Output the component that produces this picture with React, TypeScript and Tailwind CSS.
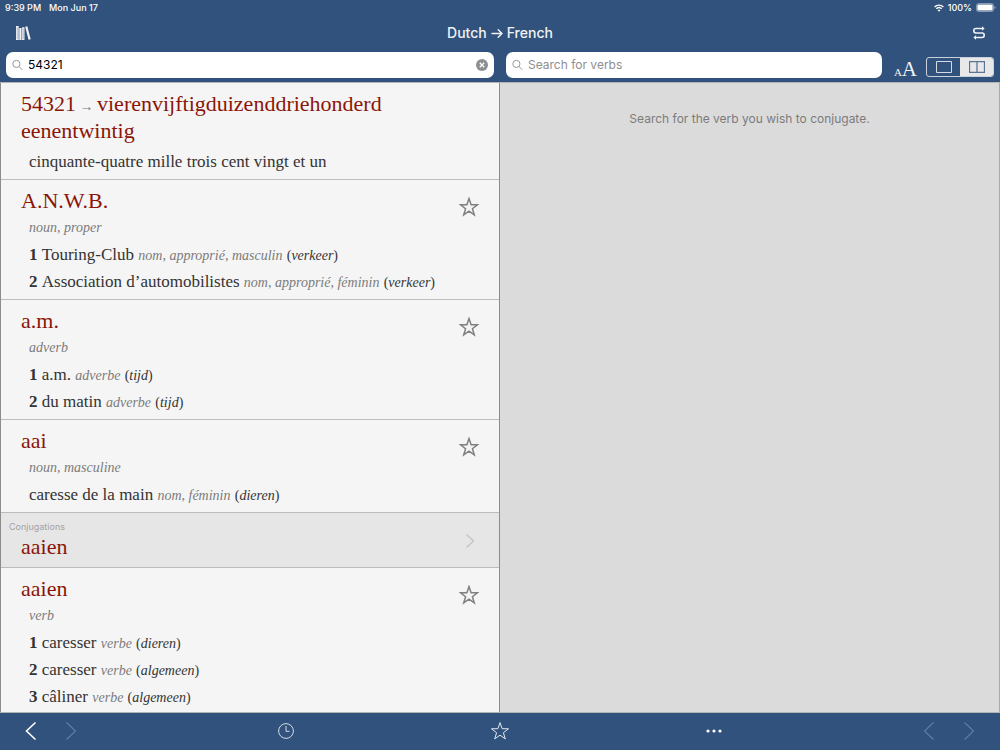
import { useState } from 'react';
import type { ReactNode } from 'react';

type Sense = { text: string; grammar: string; domain: string };
type Entry = { word: string; pos: string; senses: Sense[] };

const ENTRIES: Entry[] = [
  {
    word: 'A.N.W.B.',
    pos: 'noun, proper',
    senses: [
      { text: 'Touring-Club', grammar: 'nom, approprié, masculin', domain: 'verkeer' },
      { text: 'Association d’automobilistes', grammar: 'nom, approprié, féminin', domain: 'verkeer' },
    ],
  },
  {
    word: 'a.m.',
    pos: 'adverb',
    senses: [
      { text: 'a.m.', grammar: 'adverbe', domain: 'tijd' },
      { text: 'du matin', grammar: 'adverbe', domain: 'tijd' },
    ],
  },
  {
    word: 'aai',
    pos: 'noun, masculine',
    senses: [{ text: 'caresse de la main', grammar: 'nom, féminin', domain: 'dieren' }],
  },
];

const VERB: Entry = {
  word: 'aaien',
  pos: 'verb',
  senses: [
    { text: 'caresser', grammar: 'verbe', domain: 'dieren' },
    { text: 'caresser', grammar: 'verbe', domain: 'algemeen' },
    { text: 'câliner', grammar: 'verbe', domain: 'algemeen' },
  ],
};

function Star({ width }: { width: number }) {
  return (
    <svg width="20" height="20" viewBox="0 0 20 20" fill="none" stroke="currentColor" strokeWidth={width}>
      <path d="M10 1.6 12.1 7.7 18.5 7.8 13.4 11.7 15.3 17.9 10 14.2 4.7 17.9 6.6 11.7 1.5 7.8 7.9 7.7Z" />
    </svg>
  );
}

function Chevron({ left = false, width = 1.2 }: { left?: boolean; width?: number }) {
  return (
    <svg width="12" height="20" viewBox="0 0 12 20" fill="none" stroke="currentColor" strokeWidth={width}>
      <path d={left ? 'M10.5 1.5 1.5 10 10.5 18.5' : 'M1.5 1.5 10.5 10 1.5 18.5'} />
    </svg>
  );
}

function Magnifier() {
  return (
    <svg className="shrink-0" width="11" height="12" viewBox="0 0 12 12" fill="none" stroke="#8e8e93" strokeWidth="1">
      <circle cx="4.8" cy="4.8" r="3.9" />
      <path d="M7.7 7.7 11.2 11.2" />
    </svg>
  );
}

function EntryRow({ entry, last = false }: { entry: Entry; last?: boolean }) {
  const numbered = entry.senses.length > 1;
  return (
    <article className={`flex items-start justify-between px-5 pt-[7px] pb-1 ${last ? '' : 'border-b border-[#bcbcbc]'}`}>
      <div>
        <h2 className="text-[22px] leading-[27px] text-[#8a1508]">{entry.word}</h2>
        <p className="pl-2 text-sm leading-[27px] italic text-[#7b7b7b]">{entry.pos}</p>
        {entry.senses.map((s, i) => (
          <p key={i} className="pl-2 text-[17px] leading-[27px] text-[#333]">
            {numbered && <b>{i + 1} </b>}
            {s.text} <i className="text-sm leading-none text-[#7b7b7b]">{s.grammar}</i>{' '}
            <span className="text-sm leading-none">
              (<i>{s.domain}</i>)
            </span>
          </p>
        ))}
      </div>
      <button aria-label={`Add ${entry.word} to favourites`} className="mt-[10px] text-[#808080]">
        <Star width={1.5} />
      </button>
    </article>
  );
}

function BarButton({ label, children, dim = false }: { label: string; children: ReactNode; dim?: boolean }) {
  return (
    <button aria-label={label} disabled={dim} className={`flex w-5 justify-center ${dim ? 'text-[#5f7da3]' : 'text-white'}`}>
      {children}
    </button>
  );
}

export default function App() {
  const [query, setQuery] = useState('54321');
  const [verb, setVerb] = useState('');
  return (
    <div className="flex h-screen flex-col bg-[#30527c] font-['Inter','Liberation_Sans',sans-serif]">
      <header className="text-white">
        <div className="flex h-[15px] items-center justify-between pl-[5px] pr-1 text-[9px] leading-[15px] font-medium">
          <div className="flex gap-2">
            <span>9:39 PM</span>
            <span>Mon Jun 17</span>
          </div>
          <div className="flex items-center gap-1">
            <svg width="10" height="8" viewBox="0 0 10 8" fill="none" stroke="currentColor" strokeWidth="1.4">
              <path d="M.6 2.9A6.4 6.4 0 0 1 9.4 2.9M2.3 4.8A3.9 3.9 0 0 1 7.7 4.8" />
              <path d="M5 7.8 3.6 6.2A2 2 0 0 1 6.4 6.2Z" fill="currentColor" stroke="none" />
            </svg>
            <span>100%</span>
            <svg width="20" height="9" viewBox="0 0 20 9">
              <rect x=".5" y=".5" width="17" height="8" rx="2" fill="none" stroke="#9fb0c7" strokeWidth=".8" />
              <rect x="1.4" y="1.4" width="15.2" height="6.2" rx="1.2" fill="#fff" />
              <path d="M18.5 3v3q1-.5 1-1.5t-1-1.5" fill="#9fb0c7" />
            </svg>
          </div>
        </div>
        <div className="grid h-[37px] grid-cols-3 items-center px-[14px] pb-px text-[#f0f2f5]">
          <button aria-label="Library" className="justify-self-start">
            <svg width="18" height="16" viewBox="0 0 18 16" fill="currentColor">
              <path d="M2 1h2.7v14H2zM5.3 3h2.200v12H5.300zM8.100 2.300h2.400V15H8.100zM11.200 1.700 13.300 1.300 16.700 14.200 14.500 14.800Z" />
              <path d="M3.3 2v12M9.3 3.500v10.500" stroke="#30527c" strokeWidth=".3" />
            </svg>
          </button>
          <h1 className="flex items-center justify-center gap-1 text-sm font-medium whitespace-nowrap">
            Dutch
            <svg width="12" height="12" viewBox="0 0 12 12" fill="none" stroke="currentColor" strokeWidth="1.4" strokeLinecap="round" strokeLinejoin="round">
              <path d="M1 6.5H11M7.2 2.7 11 6.5 7.2 10.3" />
            </svg>
            French
          </h1>
          <button aria-label="Swap languages" className="justify-self-end">
            <svg width="14" height="14" viewBox="0 0 14 14" fill="none" stroke="currentColor" strokeWidth="1.6">
              <path d="M11 2.5H4a2.250 2.250 0 0 0 0 4.500H10a2.250 2.250 0 0 1 0 4.500H3" />
              <path d="M10 .3 12.600 2.500 10 4.700ZM4 9.300 1.400 11.500 4 13.700Z" fill="currentColor" stroke="none" />
            </svg>
          </button>
        </div>
        <div className="grid h-[30px] grid-cols-2 items-start">
          <div className="px-[6px]">
            <label className="flex h-[26px] items-center gap-[5px] rounded-[7px] bg-white px-[6px]">
              <Magnifier />
              <input aria-label="Search dictionary" value={query} onChange={(e) => setQuery(e.target.value)} className="min-w-0 flex-1 bg-transparent text-xs text-black outline-none" />
              <button aria-label="Clear search" onClick={() => setQuery('')}>
                <svg width="12" height="12" viewBox="0 0 12 12">
                  <circle cx="6" cy="6" r="6" fill="#8e8e93" />
                  <path d="M3.8 3.8 8.2 8.2M8.2 3.8 3.8 8.2" stroke="#fff" strokeWidth="1.3" />
                </svg>
              </button>
            </label>
          </div>
          <div className="flex px-[6px]">
            <label className="flex h-[26px] flex-1 items-center gap-[5px] rounded-[7px] bg-white px-[6px]">
              <Magnifier />
              <input aria-label="Search for verbs" placeholder="Search for verbs" value={verb} onChange={(e) => setVerb(e.target.value)} className="min-w-0 flex-1 bg-transparent text-xs text-black outline-none placeholder:text-[#8e8e93]" />
            </label>
            <button aria-label="Text size" className="ml-3 flex h-[26px] items-baseline font-['Liberation_Serif',serif] leading-[34px] text-[#f0f2f5]">
              <span className="text-[11px]">A</span>
              <span className="text-[21px]">A</span>
            </button>
            <div className="mt-[5px] ml-[9px] flex h-5 w-[68px] overflow-hidden rounded-[3px] border border-[#c9d1dc]">
              <button aria-label="Single pane" className="flex flex-1 items-center justify-center text-[#d5dbe4]">
                <svg width="16" height="12" viewBox="0 0 16 12" fill="none" stroke="currentColor"><path d="M.5 .5h15v11H.5z" /></svg>
              </button>
              <button aria-label="Two panes" className="flex flex-1 items-center justify-center bg-[#e8e8e8] text-[#5b7596]">
                <svg width="16" height="12" viewBox="0 0 16 12" fill="none" stroke="currentColor"><path d="M.5 .5h15v11H.5zM8 .5v11" strokeWidth="1.3" /></svg>
              </button>
            </div>
          </div>
        </div>
      </header>

      <main className="grid min-h-0 flex-1 grid-cols-2 border-y border-[#b4b4b4] bg-[#dbdbdb]">
        <section className="overflow-hidden border-x border-[#8c8c8c] bg-[#f5f5f5] font-['Liberation_Serif',serif]">
          <article className="border-b border-[#bcbcbc] px-5 pt-[7px] pb-1">
            <h2 className="text-[22px] leading-[27px] text-[#8a1508]">
              54321<span className="text-sm leading-none text-[#777]"> → </span>vierenvijftigduizenddriehonderd
              <wbr />
              eenentwintig
            </h2>
            <p className="mt-1 pl-2 text-[17px] leading-[27px] text-[#333]">cinquante-quatre mille trois cent vingt et un</p>
          </article>
          {ENTRIES.map((e) => (
            <EntryRow key={e.word} entry={e} />
          ))}
          <a href="#conjugations" className="flex items-center justify-between border-b border-[#bcbcbc] bg-[#e6e6e6] pt-2 pr-6 pb-[7px] pl-2 text-[#c4c4c4]">
            <span>
              <span className="block font-['Inter','Liberation_Sans',sans-serif] text-[9px] leading-3 text-[#a3a3a3]">Conjugations</span>
              <span className="block pl-3 text-[22px] leading-[27px] text-[#8a1508]">aaien</span>
            </span>
            <svg width="10" height="16" viewBox="0 0 10 16" fill="none" stroke="currentColor" strokeWidth="1.3">
              <path d="M1.5 1.5 8.5 8 1.5 14.5" />
            </svg>
          </a>
          <EntryRow entry={VERB} last />
        </section>
        <section className="border-r border-[#aaa] pt-7 text-center text-xs leading-4 text-[#7b7b7b]">
          Search for the verb you wish to conjugate.
        </section>
      </main>

      <footer className="grid h-[37px] grid-cols-[1fr_auto_1fr] items-center px-[21px] pb-[2px]">
        <div className="flex items-center gap-5">
          <BarButton label="Back"><Chevron left width={1.6} /></BarButton>
          <BarButton label="Forward" dim><Chevron /></BarButton>
          <div className="flex flex-1 justify-end pr-[196px] text-[#d5dde7]">
            <button aria-label="History">
              <svg width="16" height="16" viewBox="0 0 16 16" fill="none" stroke="currentColor"><circle cx="8" cy="8" r="7.4" /><path d="M8 3v5.3h3.5" /></svg>
            </button>
          </div>
        </div>
        <button aria-label="Favourites" className="text-[#e3e8ee]"><Star width={1} /></button>
        <div className="flex items-center gap-5">
          <div className="flex flex-1 pl-[196px]">
            <button aria-label="More" className="text-white">
              <svg width="16" height="16" viewBox="0 0 16 16" fill="currentColor"><circle cx="2" cy="8" r="1.6" /><circle cx="8" cy="8" r="1.6" /><circle cx="14" cy="8" r="1.6" /></svg>
            </button>
          </div>
          <BarButton label="Previous verb" dim><Chevron left /></BarButton>
          <BarButton label="Next verb" dim><Chevron /></BarButton>
        </div>
      </footer>
    </div>
  );
}
